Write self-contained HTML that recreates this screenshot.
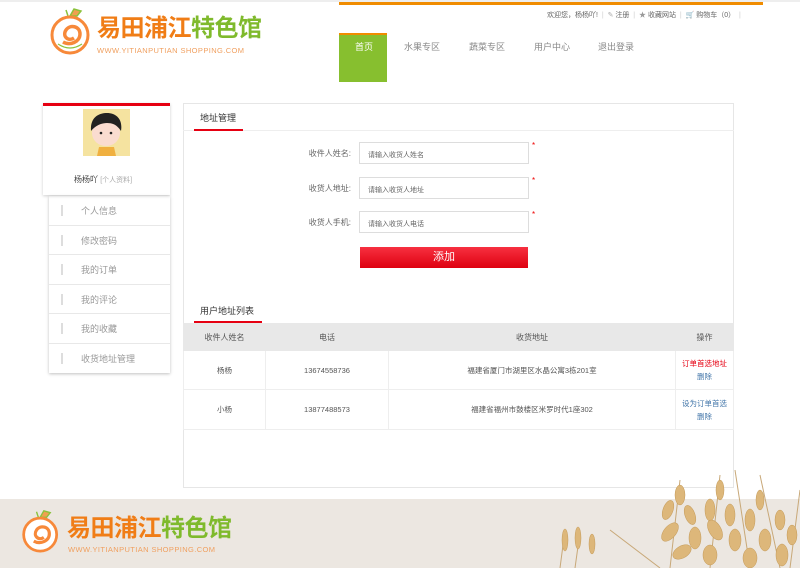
<!DOCTYPE html>
<html><head><meta charset="utf-8"><style>
*{margin:0;padding:0;box-sizing:border-box}
body{width:800px;height:568px;position:relative;background:#fff;font-family:"Liberation Sans","Noto Sans CJK SC",sans-serif;overflow:hidden;color:#555}
.a{position:absolute}
.nav{font-size:9px;color:#888;top:40px}
.lbl{font-size:8px;color:#666;text-align:right;width:80px;left:271px}
.inp{left:359px;width:170px;height:22px;border:1px solid #ddd;font-size:7px;color:#666;padding:7px 0 0 8px}
.star{left:532px;color:#e00;font-size:8px}
.mi{left:49px;width:121px;height:29.5px;border-bottom:1px solid #e8e8e8;font-size:9px;color:#999;padding:8px 0 0 32px}
.mi:before{content:"";position:absolute;left:12px;top:9px;width:2px;height:11px;background:#ddd}
table{border-collapse:collapse;font-size:7.5px;color:#555;text-align:center}
td,th{border:1px solid #eee}
th{background:#e8e8e8;font-weight:normal;height:27px;font-size:8px;border-color:#e8e8e8}
</style></head><body>
<div class="a" style="left:0;top:0;width:800px;height:2px;background:#eee"></div>
<div class="a" style="left:339px;top:2px;width:424px;height:3px;background:#f08c00"></div>
<svg class="a" style="left:48px;top:6px" width="48" height="50" viewBox="0 0 48 50">
<path d="M20 10 L18 4 M22 10 L26 3 L33 5 L29 10Z" stroke="#8bc23c" fill="#f0a050" stroke-width="1.5"/>
<circle cx="22" cy="29" r="18" fill="#fff" stroke="#f7893a" stroke-width="3"/>
<path d="M26 32 C20 36 14 30 18 24 C22 18 32 20 32 28 C32 36 22 40 15 36" stroke="#f7893a" stroke-width="3.5" fill="none"/>
<path d="M10 38 Q22 46 34 38" stroke="#8bc23c" stroke-width="1.2" fill="none"/>
</svg>
<div class="a" style="left:97px;top:14px;font-size:24px;font-weight:bold;letter-spacing:-0.5px;line-height:30px"><span style="color:#f07d16">易田浦江</span><span style="color:#7fba2c">特色馆</span></div>
<div class="a" style="left:97px;top:46px;font-size:7.5px;color:#f0a060;letter-spacing:0.4px">WWW.YITIANPUTIAN SHOPPING.COM</div>
<div class="a" style="left:547px;top:10px;font-size:7px;color:#666;white-space:nowrap">欢迎您，杨杨吖! <span style="color:#ccc">&nbsp;|&nbsp;</span> <span style="color:#aaa">✎</span> 注册 <span style="color:#ccc">&nbsp;|&nbsp;</span> <span style="color:#999">★</span> 收藏网站 <span style="color:#ccc">&nbsp;|&nbsp;</span> <span style="color:#999">🛒</span> 购物车（0） <span style="color:#ccc">&nbsp;|</span></div>
<div class="a" style="left:339px;top:33px;width:48px;height:49px;background:#87bf2f;border-top:2px solid #f08c00"></div>
<div class="a nav" style="left:355px;color:#fff">首页</div>
<div class="a nav" style="left:404px">水果专区</div>
<div class="a nav" style="left:469px">蔬菜专区</div>
<div class="a nav" style="left:534px">用户中心</div>
<div class="a nav" style="left:598px">退出登录</div>
<div class="a" style="left:43px;top:103px;width:127px;height:92px;border-top:3px solid #e60012;box-shadow:0 1px 3px rgba(0,0,0,.2)"></div>
<svg class="a" style="left:83px;top:109px" width="47" height="47" viewBox="0 0 47 47">
<rect width="47" height="47" fill="#f5e3a0"/>
<path d="M14 47 L16 38 L31 38 L33 47Z" fill="#f0b040"/>
<ellipse cx="23" cy="24" rx="14" ry="13" fill="#fadcd0"/>
<path d="M8 22 C7 8 16 4 24 4 C33 4 40 10 38 22 C34 16 30 14 24 14 C18 14 12 17 8 22Z" fill="#222"/>
<circle cx="18" cy="24" r="1.3" fill="#222"/><circle cx="28" cy="24" r="1.3" fill="#222"/>
</svg>
<div class="a" style="left:74px;top:174px;font-size:8px;color:#444">杨杨吖 <span style="color:#aaa;font-size:7px">[个人资料]</span></div>
<div class="a" style="left:49px;top:196px;width:121px;height:177px;box-shadow:0 1px 3px rgba(0,0,0,.25)"></div>
<div class="a mi" style="top:196px">个人信息</div>
<div class="a mi" style="top:225.5px">修改密码</div>
<div class="a mi" style="top:255px">我的订单</div>
<div class="a mi" style="top:284.5px">我的评论</div>
<div class="a mi" style="top:314px">我的收藏</div>
<div class="a mi" style="top:343.5px;border:none">收货地址管理</div>
<div class="a" style="left:183px;top:103px;width:551px;height:385px;border:1px solid #e6e6e6"></div>
<div class="a" style="left:183px;top:130px;width:551px;height:1px;background:#eee"></div>
<div class="a" style="left:200px;top:111px;font-size:9px;color:#333">地址管理</div>
<div class="a" style="left:194px;top:129px;width:49px;height:2px;background:#e60012"></div>
<div class="a lbl" style="top:148px">收件人姓名:</div>
<div class="a lbl" style="top:183px">收货人地址:</div>
<div class="a lbl" style="top:217px">收货人手机:</div>
<div class="a inp" style="top:142px">请输入收货人姓名</div>
<div class="a inp" style="top:177px">请输入收货人地址</div>
<div class="a inp" style="top:211px">请输入收货人电话</div>
<div class="a star" style="top:141px">*</div>
<div class="a star" style="top:176px">*</div>
<div class="a star" style="top:210px">*</div>
<div class="a" style="left:360px;top:247px;width:168px;height:21px;background:linear-gradient(#f73040,#de0010);color:#fff;font-size:11px;text-align:center;line-height:21px">添加</div>
<div class="a" style="left:200px;top:304px;font-size:9px;color:#333">用户地址列表</div>
<div class="a" style="left:194px;top:321px;width:68px;height:2px;background:#e60012"></div>
<table class="a" style="left:183px;top:323px;width:551px">
<tr><th style="width:82px">收件人姓名</th><th style="width:123px">电话</th><th style="width:287px">收货地址</th><th>操作</th></tr>
<tr style="height:39px"><td>杨杨</td><td>13674558736</td><td>福建省厦门市湖里区水晶公寓3栋201室</td><td style="line-height:13px"><span style="color:#e60012">订单首选地址</span><br><span style="color:#47a">删除</span></td></tr>
<tr style="height:40px"><td>小杨</td><td>13877488573</td><td>福建省福州市鼓楼区米罗时代1座302</td><td style="line-height:13px"><span style="color:#47a">设为订单首选</span><br><span style="color:#47a">删除</span></td></tr>
</table>
<div class="a" style="left:0;top:499px;width:800px;height:69px;background:#ece7e1"></div>
<svg class="a" style="left:520px;top:470px" width="280" height="98" viewBox="0 0 280 98">
<g stroke="#c8a878" stroke-width="1" fill="none">
<path d="M40 98 L45 60 M55 98 L60 62 M150 98 L160 10 M190 98 L200 5 M230 98 L215 0 M260 98 L240 5 M270 98 L280 20 M140 98 L90 60"/>
</g>
<g fill="#ddb77a" stroke="#c49a58" stroke-width=".5">
<ellipse cx="45" cy="70" rx="3" ry="11"/><ellipse cx="58" cy="68" rx="3" ry="11"/><ellipse cx="72" cy="74" rx="3" ry="10"/>
<ellipse cx="148" cy="40" rx="5" ry="10" transform="rotate(20 148 40)"/><ellipse cx="160" cy="25" rx="5" ry="10"/><ellipse cx="170" cy="45" rx="5" ry="10" transform="rotate(-20 170 45)"/>
<ellipse cx="150" cy="62" rx="6" ry="11" transform="rotate(40 150 62)"/><ellipse cx="175" cy="68" rx="6" ry="11"/><ellipse cx="162" cy="82" rx="6" ry="10" transform="rotate(60 162 82)"/>
<ellipse cx="190" cy="40" rx="5" ry="11"/><ellipse cx="200" cy="20" rx="4" ry="10"/><ellipse cx="210" cy="45" rx="5" ry="11"/>
<ellipse cx="195" cy="60" rx="6" ry="11" transform="rotate(-30 195 60)"/><ellipse cx="215" cy="70" rx="6" ry="11"/><ellipse cx="190" cy="85" rx="7" ry="10"/>
<ellipse cx="230" cy="50" rx="5" ry="11"/><ellipse cx="240" cy="30" rx="4" ry="10"/><ellipse cx="245" cy="70" rx="6" ry="11"/><ellipse cx="260" cy="50" rx="5" ry="10"/>
<ellipse cx="230" cy="88" rx="7" ry="10"/><ellipse cx="262" cy="85" rx="6" ry="11"/><ellipse cx="272" cy="65" rx="5" ry="10"/>
</g></svg>
<svg class="a" style="left:20px;top:506px" width="44" height="50" viewBox="0 0 48 50">
<path d="M20 10 L18 4 M22 10 L26 3 L33 5 L29 10Z" stroke="#8bc23c" fill="#f0a050" stroke-width="1.5"/>
<circle cx="22" cy="29" r="18" fill="#fff" stroke="#f7893a" stroke-width="3"/>
<path d="M26 32 C20 36 14 30 18 24 C22 18 32 20 32 28 C32 36 22 40 15 36" stroke="#f7893a" stroke-width="3.5" fill="none"/>
</svg>
<div class="a" style="left:67px;top:514px;font-size:24px;font-weight:bold;letter-spacing:-0.5px;line-height:30px"><span style="color:#f07d16">易田浦江</span><span style="color:#7fba2c">特色馆</span></div>
<div class="a" style="left:68px;top:545px;font-size:7.5px;color:#f0a060;letter-spacing:0.4px">WWW.YITIANPUTIAN SHOPPING.COM</div>
</body></html>
